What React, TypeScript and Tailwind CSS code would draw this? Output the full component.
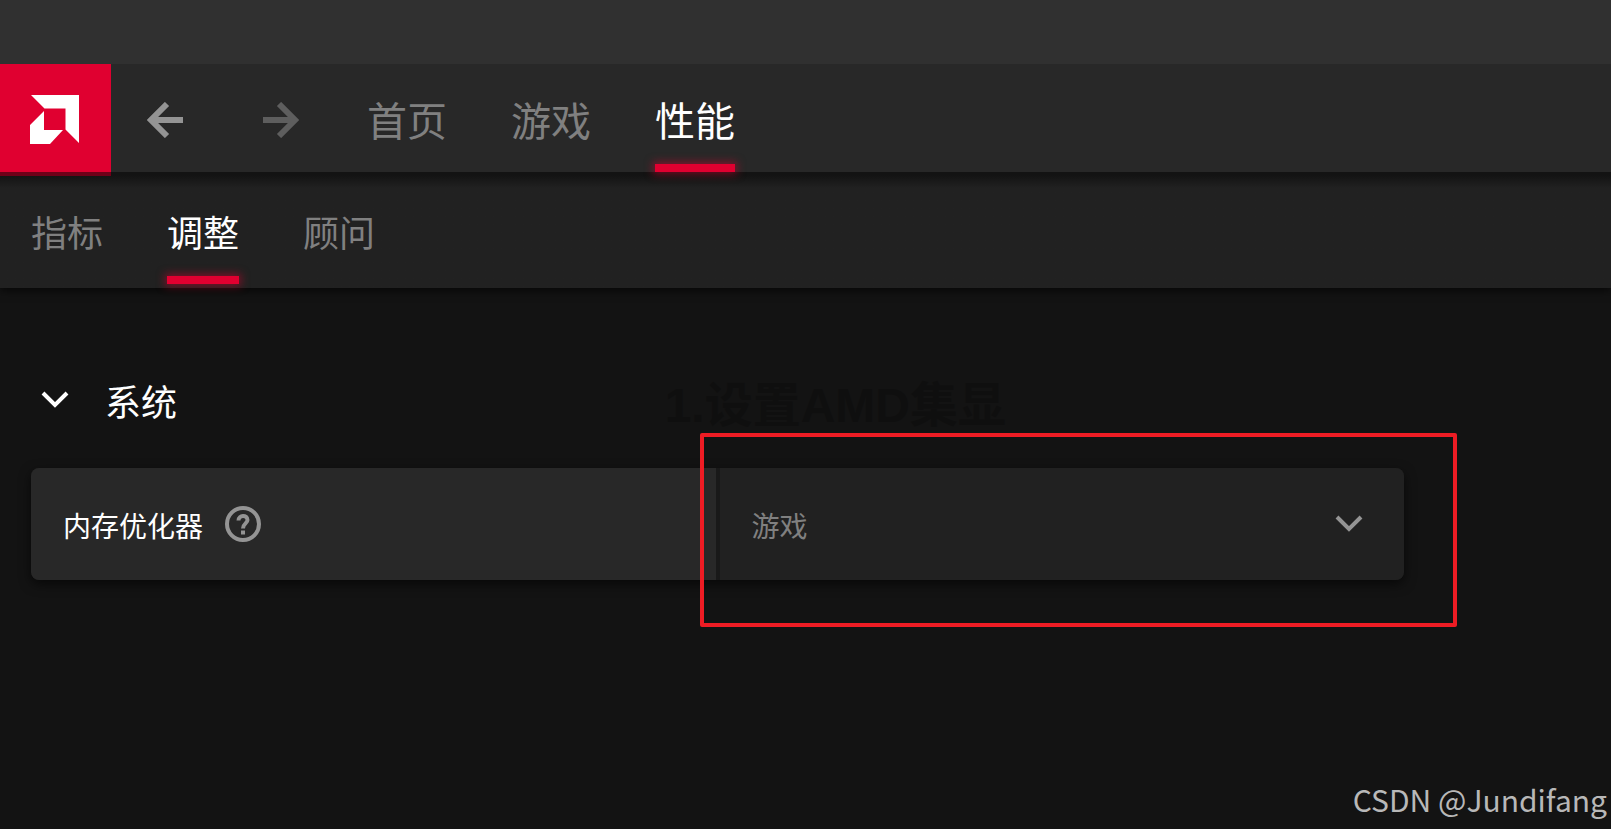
import { useState } from "react";

const mainTabs = [
  { id: "home", label: "首页" },
  { id: "gaming", label: "游戏" },
  { id: "performance", label: "性能" },
];

const subTabs = [
  { id: "metrics", label: "指标" },
  { id: "tuning", label: "调整" },
  { id: "advisors", label: "顾问" },
];

function AmdLogo() {
  return (
    <svg viewBox="0 0 49 49" className="size-[49px]" fill="#ffffff" aria-hidden="true">
      <path d="M1 0H49V48L35.500 34.500V13.500H14.500Z" />
      <path d="M14 16V35H33L20 49H0V30Z" />
    </svg>
  );
}

function BackArrow() {
  return (
    <svg viewBox="0 0 36 36" className="size-9" fill="none" stroke="currentColor" strokeWidth="6" aria-hidden="true">
      <path d="M36 18H4M20 2L4 18L20 34" />
    </svg>
  );
}

function Chevron({ className }: { className: string }) {
  return (
    <svg viewBox="0 0 28 18" className={className} fill="none" stroke="currentColor" strokeWidth="4" aria-hidden="true">
      <path d="M2 2L14 14L26 2" />
    </svg>
  );
}

function HelpIcon() {
  return (
    <svg viewBox="0 0 36 36" className="size-9" fill="none" stroke="currentColor" aria-hidden="true">
      <circle cx="18" cy="18" r="16" strokeWidth="4" />
      <path d="M13.500 14.500C13.500 8.500 22.500 8.500 22.500 14C22.500 17.500 18 17.500 18 22.500" strokeWidth="4" />
      <path d="M18 24.500V28.500" strokeWidth="4" />
    </svg>
  );
}

export default function App() {
  const [mainTab, setMainTab] = useState("performance");
  const [subTab, setSubTab] = useState("tuning");
  const [optimizer, setOptimizer] = useState("gaming");

  return (
    <div className="relative flex min-h-screen flex-col bg-[#131313] font-['Noto_Sans_CJK_SC',sans-serif] text-white">
      <div className="h-16 bg-[#303030]" />

      <header className="relative z-10 flex h-[108px] bg-[#282828]">
        <a
          href="#home"
          aria-label="AMD"
          className="-mb-1 flex w-[111px] items-center justify-center border-b-4 border-[#6f0018] bg-[#e00030] pt-0.5 pr-0.5"
        >
          <AmdLogo />
        </a>

        <div className="flex items-center gap-20 pt-1 pr-[68px] pl-9">
          <button type="button" aria-label="后退" className="text-[#949494]">
            <BackArrow />
          </button>
          <button type="button" aria-label="前进" className="rotate-180 text-[#5e5e5e]">
            <BackArrow />
          </button>
        </div>

        <nav className="flex gap-16">
          {mainTabs.map((tab) => (
            <button
              key={tab.id}
              type="button"
              onClick={() => setMainTab(tab.id)}
              className={`relative flex items-center pt-px text-[40px] leading-none ${
                mainTab === tab.id ? "text-white" : "text-[#808080]"
              }`}
            >
              {tab.label}
              {mainTab === tab.id && (
                <span className="absolute inset-x-0 bottom-0 h-2 bg-[#e00030] shadow-[0_0_8px_2px_#e0003080]" />
              )}
            </button>
          ))}
        </nav>
      </header>

      <nav className="relative flex h-[116px] gap-16 bg-linear-to-b from-[#131313] from-[3px] to-[#212121] to-[16px] px-[31px] shadow-[0_3px_8px_#00000099]">
        {subTabs.map((tab) => (
          <button
            key={tab.id}
            type="button"
            onClick={() => setSubTab(tab.id)}
            className={`relative flex items-center pt-0.5 text-[36px] leading-none ${
              subTab === tab.id ? "text-white" : "text-[#808080]"
            }`}
          >
            {tab.label}
            {subTab === tab.id && (
              <span className="absolute inset-x-0 bottom-1 h-2 bg-[#e00030] shadow-[0_0_8px_2px_#e0003080]" />
            )}
          </button>
        ))}
      </nav>

      <main className="flex-1 pt-[88px] pr-[207px] pl-[31px]">
        <div className="flex items-center">
          <button type="button" className="flex h-12 items-center gap-9 pl-[10px]">
            <Chevron className="h-[18px] w-7" />
            <span className="text-[36px] leading-none">系统</span>
          </button>
          <p className="ml-auto pt-3 pr-[398px] font-['Liberation_Sans','Noto_Sans_CJK_SC',sans-serif] text-[48px] leading-9 font-bold whitespace-nowrap text-[#0f0f0f]">
            1.设置AMD集显
          </p>
        </div>

        <section className="mt-11 grid h-28 grid-cols-2 gap-1 rounded-lg bg-[#191919] shadow-[0_4px_12px_#00000099]">
          <div className="flex items-center gap-[22px] rounded-l-lg bg-[#282828] pl-8">
            <label htmlFor="memory-optimizer" className="pt-0.5 text-[28px]">
              内存优化器
            </label>
            <button type="button" aria-label="帮助" className="text-[#949494]">
              <HelpIcon />
            </button>
          </div>

          <div className="relative flex items-center rounded-r-lg bg-[#212121]">
            <select
              id="memory-optimizer"
              value={optimizer}
              onChange={(e) => setOptimizer(e.target.value)}
              className="size-full appearance-none rounded-r-lg bg-transparent pt-0.5 pl-8 text-[28px] text-[#808080] outline-none"
            >
              <option value="gaming">游戏</option>
              <option value="productivity">生产力</option>
            </select>
            <Chevron className="pointer-events-none absolute right-[41px] h-[18px] w-7 text-[#949494]" />
            <div className="pointer-events-none absolute -top-[35px] -right-[53px] -bottom-[47px] -left-5 rounded-xs border-4 border-[#ee1c24]" />
          </div>
        </section>
      </main>

      <footer className="absolute right-1 bottom-[10px] text-[30px] leading-10 text-[#b8b8b8]">
        CSDN @Jundifang
      </footer>
    </div>
  );
}
